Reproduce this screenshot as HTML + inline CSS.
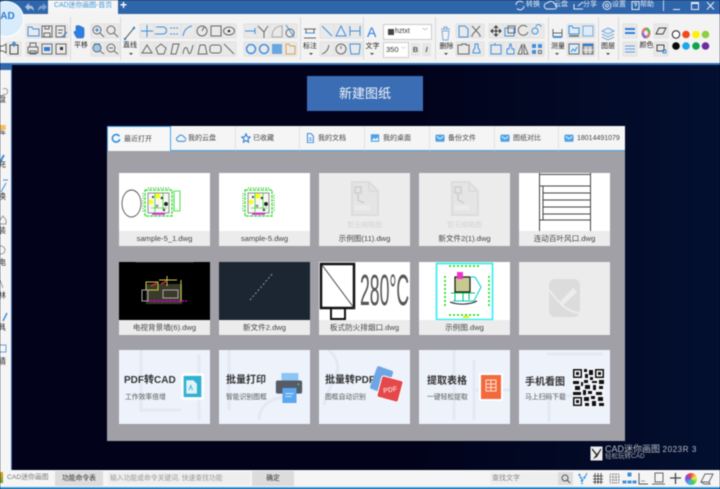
<!DOCTYPE html>
<html lang="zh"><head><meta charset="utf-8"><style>
html,body{margin:0;padding:0}
body{width:720px;height:489px;overflow:hidden;position:relative;background:#02021a;font-family:"Liberation Sans","Noto Sans CJK SC",sans-serif;color:#333}
#w{position:absolute;left:0;top:0;width:720px;height:489px;overflow:hidden;filter:blur(.4px)}
.a{position:absolute;white-space:nowrap}
.tb{font-size:7px;line-height:10px;color:#e6edf7}
.tl{font-size:7px;line-height:12px;color:#222;transform:translateX(-50%)}
.tab{position:absolute;top:126px;height:24px;background:#f5f5f5;border-bottom:1px solid #4aa3e8;border-right:1px solid #e2e2e2;font-size:7px;line-height:25px;color:#444}
.tab span{position:absolute;left:18px}
.tab svg{position:absolute;left:5px;top:7px}
.card{position:absolute;width:91px;height:73px;background:#fff;overflow:hidden}
.card b{position:absolute;left:0;right:0;bottom:0;height:15px;background:#ececec;font:normal 7.6px/15px "Liberation Sans","Noto Sans CJK SC",sans-serif;text-align:center;color:#444}
.gray{background:#ececec}
.pro{position:absolute;width:91px;height:74px;background:#edf2fb;overflow:hidden}
.pro i{position:absolute;font-style:normal;font-weight:700;font-size:10px;line-height:15px;color:#333;white-space:nowrap}
.pro u{position:absolute;text-decoration:none;font-size:6.8px;line-height:10px;color:#555;white-space:nowrap}
.sd{position:absolute;left:-2px;font-size:8px;line-height:10px;color:#333}
</style></head><body><div id="w">

<!-- title bar -->
<div class="a" style="left:0;top:0;width:720px;height:14px;background:#2f66ab"></div>
<div class="a" style="left:48px;top:0;width:70px;height:14px;background:#f5f5f5"></div>
<div class="a" style="left:54px;top:0;font-size:6.900px;line-height:12px;color:#3f97dd">CAD迷你画图-首页</div>
<div class="a" style="left:120px;top:-2px;font-size:12px;font-weight:700;line-height:15px;color:#fff">+</div>
<svg class="a" style="left:24px;top:2px" width="24" height="11"><path d="M1 5 5 1V3.500C8 3.500 10 5 10 9 8.500 7 7 6.500 5 6.500V9Z" fill="#a9c0de"/><path d="M23 5 19 1V3.500C16 3.500 14 5 14 9 15.500 7 17 6.500 19 6.500V9Z" fill="#7f9fc9"/></svg>
<svg class="a" style="left:514px;top:-1px" width="135" height="13" fill="none" stroke="#dfe8f5"><path d="M2 6a4 4 0 0 1 7-2.500M10 7a4 4 0 0 1-7 2.500"/><path d="M33 10h7a2.500 2.500 0 0 0 .5-5 4 4 0 0 0-7-1 3 3 0 0 0-.5 6z"/><path d="M60 5v5h9M64 7l5-4"/><circle cx="93" cy="6.500" r="4"/><circle cx="93" cy="6.500" r="1.500"/><rect x="118" y="2.500" width="7" height="8"/><path d="M120 5c1-1.500 3-1 2.500.5l-1 1v1"/></svg>
<div class="a tb" style="left:526px;top:0">转换</div>
<div class="a tb" style="left:554px;top:0">云盘</div>
<div class="a tb" style="left:583px;top:0">分享</div>
<div class="a tb" style="left:612px;top:0">设置</div>
<div class="a tb" style="left:640px;top:0">帮助</div>
<svg class="a" style="left:660px;top:0" width="60" height="14" fill="none" stroke="#e6edf7"><path d="M3.500 0v11" stroke="#c3d4e8"/><path d="M13 9.500h7M31.500 2.500h7v7h-7zM31.500 3.500h7"/><path d="M47 2l7 7.500M54 2l-7 7.500"/></svg>

<!-- toolbar -->
<div class="a" style="left:0;top:14px;width:720px;height:49px;background:#f3f3f3"></div>
<div class="a" style="left:48px;top:12px;width:70px;height:3px;background:#f3f3f3"></div>
<div class="a" style="left:0;top:63px;width:720px;height:2px;background:#2f72b8"></div>

<svg class="a" style="left:0;top:0" width="720" height="65" fill="none" stroke="#555" stroke-width="1">
<defs>
<rect id="k" x="-7" y="-7" width="14" height="14" rx="1" fill="#e9e9e9" stroke="#e0e0e0"/>
</defs>
<g stroke="#d8d8d8"><path d="M70.500 17v43M120.500 17v43M300.500 17v43M363.500 17v43M435.500 17v43M548.500 17v43M598.500 17v43M618.500 17v43"/></g>
<g>
<use href="#k" x="14" y="49"/><use href="#k" x="33" y="31"/><use href="#k" x="47" y="31"/><use href="#k" x="61" y="31"/><use href="#k" x="33" y="49"/><use href="#k" x="47" y="49"/><use href="#k" x="61" y="49"/>
<use href="#k" x="98" y="31"/><use href="#k" x="112" y="31"/><use href="#k" x="98" y="49"/><use href="#k" x="112" y="49"/>
<use href="#k" x="147" y="31"/><use href="#k" x="161" y="31"/><use href="#k" x="174" y="31"/><use href="#k" x="188" y="31"/><use href="#k" x="202" y="31"/><use href="#k" x="216" y="31"/><use href="#k" x="229" y="31"/>
<use href="#k" x="147" y="49"/><use href="#k" x="161" y="49"/><use href="#k" x="174" y="49"/><use href="#k" x="188" y="49"/><use href="#k" x="202" y="49"/><use href="#k" x="216" y="49"/><use href="#k" x="229" y="49"/>
<use href="#k" x="251" y="31"/><use href="#k" x="264" y="31"/><use href="#k" x="277" y="31"/><use href="#k" x="290" y="31"/><use href="#k" x="251" y="49"/><use href="#k" x="264" y="49"/><use href="#k" x="277" y="49"/><use href="#k" x="290" y="49"/>
<use href="#k" x="327" y="31"/><use href="#k" x="341" y="31"/><use href="#k" x="355" y="31"/><use href="#k" x="327" y="49"/><use href="#k" x="341" y="49"/><use href="#k" x="355" y="49"/>
<use href="#k" x="463" y="31"/><use href="#k" x="477" y="31"/><use href="#k" x="463" y="49"/><use href="#k" x="477" y="49"/>
<use href="#k" x="496" y="31"/><use href="#k" x="510" y="31"/><use href="#k" x="523" y="31"/><use href="#k" x="537" y="31"/><use href="#k" x="496" y="49"/><use href="#k" x="510" y="49"/><use href="#k" x="523" y="49"/><use href="#k" x="537" y="49"/>
<use href="#k" x="574" y="31"/><use href="#k" x="588" y="31"/><use href="#k" x="574" y="49"/><use href="#k" x="588" y="49"/>
<use href="#k" x="630" y="31"/><use href="#k" x="630" y="49"/><use href="#k" x="661" y="31"/><use href="#k" x="661" y="49"/>
</g>
<g stroke="#666"><path d="M0 46h3l3-2v9l-3-2H0z"/>
<path d="M10 45h8v9H10z" stroke="#444"/><path d="M14 47v-5M12 44l2-2 2 2" stroke="#2a7fd4"/>
<path d="M28 36v-9h4l1 2h6v7z" stroke="#3f8fdc"/><path d="M42 26h10v11H42zM45 26v3h4v-3M44 37v-4h6v4"/><path d="M56 26h9v11h-9zM58 30h5M58 33h4"/><path d="M62 37l5-5" stroke="#2a7fd4"/>
<path d="M30 47v-4h6v4M28 47h10v6H28zM30 51h6v3h-6z"/><path d="M42 44h10v10H42z"/><path d="M44 47h6v4h-6z" fill="#2a7fd4" stroke="none"/><path d="M56 44h10v10H56z"/><path d="M60 47h3v3h-3z" fill="#333" stroke="none"/></g>
<path d="M77 38c-2-3-3-5-3-6s2-1 2 1v-6c0-2 2-2 2 0 0-2 2-2 2 0 0-1 2-1 2 1 0-1 2-1 2 1v6c0 2-1 3-2 3z" fill="#2f7fe0" stroke="#1e66c4" stroke-width=".6"/>
<g stroke="#666"><circle cx="97" cy="30" r="4"/><path d="M100 33l4 4"/><path d="M95 30h4M97 28v4" stroke="#2a7fd4"/><circle cx="111" cy="30" r="4"/><path d="M114 33l4 4"/><circle cx="97" cy="48" r="4" fill="#9cc8ef"/><path d="M100 51l4 3M94 44h6"/><circle cx="111" cy="48" r="4"/><path d="M114 51l4 3M109 48h4"/></g>
<path d="M125 39l9-11" stroke="#555"/><circle cx="134" cy="28" r="1.200" fill="#2a7fd4" stroke="none"/><circle cx="125" cy="39" r="1.200" fill="#2a7fd4" stroke="none"/>
<g stroke="#3f8fdc"><path d="M141 31h12M147 25v12"/><path d="M156 27h7a3 3 0 0 1 0 7h-6M157 34l-2 0"/><path d="M170 28h8M170 34h8" stroke-dasharray="2 1"/><path d="M183 36c1-6 4-9 9-10"/></g>
<g stroke="#666"><circle cx="202" cy="31" r="5"/><path d="M202 31l2-4"/><rect x="211" y="26" width="10" height="10"/><ellipse cx="229" cy="31" rx="5.500" ry="4"/></g>
<circle cx="229" cy="31" r="1.300" fill="#333" stroke="none"/>
<g stroke="#666"><path d="M142 53l5-8 5 8z"/><path d="M161 44l5 4-2 6h-6l-2-6z"/><path d="M171 54l2-10h6l-3 10z"/><path d="M183 54c1-8 4-8 5-3s3 3 5-6"/><path d="M198 54l2-9h5l2 9z"/><rect x="210" y="45" width="11" height="8" rx="2.500"/><path d="M224 44l10 10"/></g>
<g stroke="#666"><path d="M245 31h10M255 28v6" stroke="#3f8fdc"/><path d="M258 26l6 6M268 26l-4 6v6"/><path d="M272 37h10V26c-6 0-10 4-10 11z" stroke="#aaa"/><circle cx="290" cy="33" r="4"/><path d="M286 25l8 12" stroke="#3f8fdc"/>
<circle cx="251" cy="49" r="4.500" stroke="#3f8fdc" stroke-width="1.500"/><circle cx="264" cy="49" r="4.500" stroke="#3f8fdc" stroke-width="1.500"/><rect x="272" y="44" width="10" height="10" fill="#3f8fdc" stroke="none" opacity=".75"/><path d="M286 44h3l1 2h5v8h-9z" stroke="#dca04a"/></g>
<g stroke="#666"><path d="M304 29h12M306 29v4M314 29v4M304 38h12"/><path d="M305 33h10" stroke="#3f8fdc"/>
<path d="M322 26l10 10" stroke="#3f8fdc"/><path d="M336 36l5-10 5 10zM336 36h10" stroke="#3f8fdc"/><path d="M350 26v10M360 26v10M350 31h10" stroke="#3f8fdc"/>
<path d="M322 54c3-1 6-3 7-9"/><circle cx="341" cy="49" r="5"/><path d="M341 49v-3"/><path d="M350 44h10v3l-1 7h-8l-1-7z" stroke="#3f8fdc"/></g>
<g stroke="#666"><path d="M442 31h7l-1 9h-5zM441 29h9M444 29v-2h3v2" stroke="#7aa9d4"/>
<path d="M459 26h6l3 3v8h-9z" stroke="#3f8fdc"/><path d="M472 26l8 9M480 26l-8 9M471 36h2M479 36h2"/><path d="M458 45h4v-1h4v1h3v9h-11z"/><path d="M473 53c0-3 1-4 2-5v-4h3v4c1 1 2 2 2 5z" stroke="#3f8fdc"/>
<path d="M491 31h10M496 26v10M494 28l2-2 2 2M494 34l2 2 2-2M493 29l-2 2 2 2M499 29l2 2-2 2" stroke="#333"/><path d="M505 28h9v8h-9z" stroke="#3f8fdc"/><path d="M508 26h7v7h-7z"/><path d="M527 27a5 5 0 1 0 1 5"/><path d="M532 31a3 3 0 1 1 6 0 3 3 0 1 1-6 0M536 27a2.500 2.500 0 1 1 5 0" stroke="#3f8fdc"/>
<path d="M491 45h10v9h-10zM495 45v-2" stroke="#3f8fdc"/><path d="M507 54v-5h2l1-5h1l1 5h2v5z" stroke="#3f8fdc"/><path d="M522 44l-4 10h4zM524 44l4 10h-4z"/></g>
<g fill="#3f8fdc" stroke="none"><rect x="532" y="44" width="4" height="4"/><rect x="538" y="44" width="4" height="4"/><rect x="532" y="50" width="4" height="4"/></g><rect x="538.500" y="50.500" width="3" height="3" stroke="#666"/>
<g stroke="#666"><path d="M553 29v8M562 29v8M553 33h9"/><path d="M553 37h9" stroke="#3f8fdc" stroke-width="2"/><path d="M569 26h3l1 2h6v6h-10z" stroke="#3f8fdc" fill="#dcecfb"/><path d="M569 36h10" stroke-width="1.500"/><rect x="583" y="26" width="10" height="10" fill="#dcecfb" stroke="#7aa9d4"/>
<rect x="569" y="44" width="10" height="10" fill="#dcecfb"/><path d="M571 52l2-3 2 2 2-4" stroke="#3f8fdc"/><rect x="583" y="44" width="10" height="10" fill="#bbb"/><path d="M583 45h10" stroke="#2a7fd4" stroke-width="2"/><path d="M586 47v7M590 47v7M583 50h10" stroke="#eee"/></g>
<g stroke="#7aa9d4"><path d="M608 28l6 3-6 3-6-3z" fill="#e2eefb"/><path d="M602 34l6 3 6-3M602 37l6 3 6-3"/></g>
<g stroke-width="2" stroke="#2f7fe0"><path d="M625 29h10M625 33h10"/></g><g stroke="#5b9ce0"><path d="M625 46h10M625 49h10M625 52h10"/></g>
<ellipse cx="646" cy="33" rx="4.500" ry="5.500" fill="#d77" stroke="none"/><path d="M646 27.500a4.500 5.500 0 0 1 4.500 5.500h-4.500z" fill="#5cb85c" stroke="none"/><path d="M646 33h-4.500a4.500 5.500 0 0 0 4.500 5.500z" fill="#7a6fd0" stroke="none"/><ellipse cx="646" cy="33" rx="2" ry="2.500" fill="#eee" stroke="none"/>
<path d="M656 34l3-6h7l-3 6z" stroke="#444"/><path d="M657 45h7v6h-7z" stroke="#444"/><path d="M663 50h3v3h-3z" stroke="#3f8fdc"/>
<g stroke="none"><circle cx="676" cy="34.500" r="3.700" fill="#fff" stroke="#222"/><circle cx="686" cy="34.500" r="3.800" fill="#f0491c"/><circle cx="696" cy="34.500" r="3.800" fill="#fff200"/><circle cx="705.500" cy="34.500" r="3.800" fill="#8ccf3f"/><circle cx="676" cy="46" r="3.800" fill="#0a0a0a"/><circle cx="686" cy="46" r="3.800" fill="#1ea7e8"/><circle cx="696" cy="46" r="3.800" fill="#0fa34a"/><circle cx="705.500" cy="46" r="3.800" fill="#6a2ea0"/></g>
<g fill="#444" stroke="none"><path d="M129 53h4l-2 2zM309 53h4l-2 2zM370 53h4l-2 2zM444 53h4l-2 2zM555 53h4l-2 2zM606 53h4l-2 2z"/></g>
</svg>
<!-- logo -->
<div class="a" style="left:-12px;top:1px;width:34px;height:34px;border-radius:50%;background:#d9ecfb;border:1px solid #fff"></div>
<div class="a" style="left:-7px;top:11px;font-size:10px;font-weight:700;line-height:12px;color:#2f7fd0"><span style="color:#f0a030">C</span>AD</div>
<div class="a tl" style="left:81px;top:40px">平移</div>
<div class="a tl" style="left:130px;top:40px">直线</div>
<div class="a tl" style="left:310px;top:41px">标注</div>
<div class="a tl" style="left:372.500px;top:41px">文字</div>
<div class="a tl" style="left:446.500px;top:41px">删除</div>
<div class="a tl" style="left:558px;top:41px">测量</div>
<div class="a tl" style="left:608px;top:41px">图层</div>
<div class="a tl" style="left:646.500px;top:40px">颜色</div>
<div class="a" style="left:367px;top:24px;font-size:14px;line-height:16px;color:#2f7fe0">A</div>
<div class="a" style="left:383px;top:24px;width:47px;height:14px;background:#fff;border:1px solid #ccc;font-size:7px;line-height:14px;color:#333;text-indent:11px">hztxt<span style="position:absolute;left:4px;top:4px;width:6px;height:6px;background:#444;text-indent:0"></span><span style="position:absolute;left:38px;top:0;color:#888;font-size:6px;text-indent:0">﹀</span></div>
<div class="a" style="left:383px;top:42px;width:24px;height:14px;background:#fff;border:1px solid #ccc;font-size:7.500px;line-height:14px;color:#333;text-indent:2px">350<span style="position:absolute;left:17px;top:0;color:#888;font-size:5px;text-indent:0">﹀</span></div>
<div class="a" style="left:411px;top:43px;width:9px;height:13px;background:#e6e6e6;font:700 7.500px/13px 'Liberation Sans';text-align:center;color:#555">B</div>
<div class="a" style="left:422px;top:43px;width:9px;height:13px;background:#e6e6e6;font:italic 700 7.500px/13px 'Liberation Sans';text-align:center;color:#555">I</div>

<!-- main bg glow -->
<div class="a" style="left:12px;top:65px;width:708px;height:405px;background:linear-gradient(90deg,#02021a 0,#02021a 55%,#031030 100%)"></div>

<!-- sidebar -->
<div class="a" style="left:0;top:65px;width:11px;height:405px;background:#f5f5f5;border-right:1px solid #3a6fb0;overflow:hidden">
<div class="sd" style="top:30px">盘</div>
<div class="sd" style="top:62px">库</div>
<div class="sd" style="top:95px">充</div>
<div class="sd" style="top:127px">换</div>
<div class="sd" style="top:161px">装</div>
<div class="sd" style="top:193px">电</div>
<div class="sd" style="top:226px">林</div>
<div class="sd" style="top:258px">具</div>
<div class="sd" style="top:292px">猜</div>
</div>
<div class="a" style="left:0;top:64px;width:12px;height:6px;background:#2f66ab"></div>
<svg class="a" style="left:0;top:70px" width="11" height="290" fill="none" stroke="#999"><path d="M3 19a3 3 0 1 1 0 5"/><path d="M0 55h6l-1 5H0z" fill="#f0c060" stroke="none"/><path d="M4 85l-4 7" stroke="#3f8fdc" stroke-width="2"/><path d="M3 110h5M6 113l-5 9" stroke="#3f8fdc"/><path d="M0 150l3-4 3 4v4H0"/><circle cx="1" cy="180" r="4"/><path d="M0 210l3 8"/><path d="M7 243l-4 8" stroke="#3f8fdc" stroke-width="1.500"/><path d="M0 275h6v7H0" stroke="#6aa0d8"/></svg>

<!-- new button -->
<div class="a" style="left:307px;top:76px;width:116px;height:35px;background:#3a6db4;color:#f2f5fa;font-size:13px;line-height:36px;text-align:center">新建图纸</div>

<!-- panel -->
<div class="a" style="left:107px;top:126px;width:518px;height:315px;background:#a0a0a6"></div>
<div class="tab" style="left:171px;width:64px"><svg width="10" height="10" viewBox="0 0 12 12" fill="none" stroke="#3f8fdc" stroke-width="1.300"><path d="M3 10h6a2.500 2.500 0 0 0 .5-5 3.500 3.500 0 0 0-6.500-.5A2.800 2.800 0 0 0 3 10z"/></svg><span style="left:17px">我的云盘</span></div>
<div class="tab" style="left:236px;width:63px"><svg width="10" height="10" viewBox="0 0 12 12" fill="none" stroke="#2f7fd0" stroke-width="1.300"><path d="M6 1l1.500 3.500 3.500.4-2.600 2.400.7 3.700L6 9l-3.100 1.900.7-3.700L1 4.900l3.500-.4z"/></svg><span style="left:17px">已收藏</span></div>
<div class="tab" style="left:300px;width:64px"><svg width="10" height="10" viewBox="0 0 12 12" fill="none" stroke="#3f8fdc" stroke-width="1.300"><path d="M3 .6h4l3 3v8H3z"/><path d="M5 6h3M5 8.500h3"/></svg><span>我的文档</span></div>
<div class="tab" style="left:365px;width:64px"><svg width="10" height="10" viewBox="0 0 12 12"><rect x="1" y="1.500" width="10" height="9" fill="#4fa1e6"/><path d="M2 9l3-3 2 2 2-3 1 4z" fill="#fff"/></svg><span>我的桌面</span></div>
<div class="tab" style="left:430px;width:64px"><svg width="10" height="10" viewBox="0 0 12 12"><rect x=".5" y="2" width="11" height="8.500" rx="1.500" fill="#4fa1e6"/><path d="M2 4l4 3 4-3" stroke="#fff" fill="none"/></svg><span>备份文件</span></div>
<div class="tab" style="left:495px;width:63px"><svg width="10" height="10" viewBox="0 0 12 12"><rect x=".5" y="2" width="11" height="8.500" rx="1.500" fill="#4fa1e6"/><path d="M2 4l4 3 4-3" stroke="#fff" fill="none"/></svg><span>图纸对比</span></div>
<div class="tab" style="left:559px;width:66px;border-right:0"><svg width="10" height="10" viewBox="0 0 12 12"><rect x=".5" y="2" width="11" height="8.500" rx="1.500" fill="#4fa1e6"/><path d="M2 4l4 3 4-3" stroke="#fff" fill="none"/></svg><span>18014491079</span></div>
<div class="tab" style="left:107px;width:62px;background:#f7f7f7;border:1px solid #4aa3e8;border-bottom:0"><svg width="10" height="10" viewBox="0 0 12 12" style="left:3px;top:6px" fill="none" stroke="#2f8fe0" stroke-width="1.900"><path d="M10 4a4.500 4.500 0 1 0 .5 3.500"/></svg><span style="left:16px">最近打开</span></div>

<!-- symbols -->
<svg width="0" height="0" style="position:absolute"><defs>
<g id="plan"><rect x="2" y="3" width="27" height="26" fill="none" stroke="#22dd22" stroke-width="1.200" stroke-dasharray="3 1"/><rect x="5" y="6" width="21" height="20" fill="#f7f7f4" stroke="#222" stroke-width=".5"/><circle cx="15" cy="9" r="2.500" fill="#ff0"/><circle cx="8" cy="15" r="2.200" fill="#ff0"/><circle cx="23" cy="17" r="2" fill="#222"/><circle cx="19" cy="11" r="1.200" fill="#222"/><circle cx="14" cy="19" r="1.500" fill="#999"/><circle cx="10" cy="10" r="1" fill="#222"/><circle cx="21" cy="23" r="1.200" fill="#444"/><path d="M9 27h13" stroke="#f0f" stroke-width="1.500"/><path d="M5 1h21M0 6v20M31 8v16" stroke="#0a0" stroke-width=".9" stroke-dasharray="1 1.500"/><path d="M8 21h16M12 6v20M20 6v18" stroke="#0c0" stroke-width=".6"/></g>
<g id="dwg" fill="none" stroke="#dcdcdc" stroke-width="2"><path d="M2 1h17l9 9v24H2z" fill="#e5e5e5"/><path d="M19 1v9h9"/><rect x="5" y="6" width="6" height="6" stroke="#d2d2d2"/><path d="M8 13v6l6 3" stroke="#d2d2d2"/></g>
</defs></svg>

<!-- row 1 -->
<div class="card" style="left:119px;top:173px"><svg width="91" height="58"><ellipse cx="12.500" cy="30.500" rx="9.500" ry="13.500" fill="none" stroke="#555" stroke-width=".9"/><use href="#plan" x="24" y="14"/><path d="M55 18h6v20h-6z" fill="none" stroke="#2d2" stroke-width=".8"/></svg><b>sample-5_1.dwg</b></div>
<div class="card" style="left:219px;top:173px"><svg width="91" height="58"><use href="#plan" x="24" y="14"/></svg><b>sample-5.dwg</b></div>
<div class="card gray" style="left:319px;top:173px"><svg width="91" height="48" style="position:absolute;left:0;top:6px"><use href="#dwg" x="31" y="2"/><text x="36" y="31" font-size="6" font-weight="700" fill="#f2f2f2" font-family="Liberation Sans">DWG</text></svg><span style="position:absolute;left:0;right:0;top:48px;text-align:center;font-size:7px;line-height:10px;color:#d4d4d4">暂无缩略图</span><b>示例图(11).dwg</b></div>
<div class="card gray" style="left:419px;top:173px"><svg width="91" height="48" style="position:absolute;left:0;top:6px"><use href="#dwg" x="31" y="2"/><text x="36" y="31" font-size="6" font-weight="700" fill="#f2f2f2" font-family="Liberation Sans">DWG</text></svg><span style="position:absolute;left:0;right:0;top:48px;text-align:center;font-size:7px;line-height:10px;color:#d4d4d4">暂无缩略图</span><b>新文件2(1).dwg</b></div>
<div class="card" style="left:519px;top:173px"><svg width="91" height="58" fill="none" stroke="#444"><path d="M20.500 0v58M71.500 0v58"/><path d="M20 1.500h52M21 13h50M24 20h47M24 27h47M24 34h47M24 41h47M21 47h50M24 13v34"/></svg><b>连动百叶风口.dwg</b></div>

<!-- row 2 -->
<div class="card" style="left:119px;top:262px;background:#000"><svg width="91" height="58"><path d="M17 0h58" stroke="#999" stroke-dasharray="1 1"/><rect x="27" y="22" width="36" height="20" fill="#3a3a2a"/><path d="M27 20h12v8H27zM40 18h18M48 14v10M62 18v22" stroke="#c9c94a" fill="none"/><path d="M32 24l6-3M42 22l6-3" stroke="#d33" stroke-width="1.500"/><path d="M30 39h38" stroke="#b0b" stroke-width="1.500" stroke-dasharray="3 1"/><path d="M23 28h6v11h-6zM44 28h15v8H44z" stroke="#aaa" fill="none"/></svg><b>电视背景墙(6).dwg</b></div>
<div class="card" style="left:219px;top:262px;background:#1c2632"><svg width="91" height="58"><path d="M31 38l23-27" stroke="#8c98a0" stroke-dasharray="2 2"/></svg><b>新文件2.dwg</b></div>
<div class="card" style="left:319px;top:262px"><svg width="91" height="58" fill="none" stroke="#111"><rect x="2" y="2" width="33" height="44" stroke-width="2.500"/><path d="M3 3l32 43" stroke="#444"/><path d="M12 47v10h14V47" stroke-width="2"/></svg><div class="a" style="left:41px;top:7px;font-size:44px;line-height:44px;color:#555;transform:scaleX(.4);transform-origin:0 0">280°C</div><b>板式防火排烟口.dwg</b></div>
<div class="card" style="left:419px;top:262px"><svg width="91" height="58" fill="none"><rect x="17.500" y="1.500" width="56" height="56" stroke="#2ee" stroke-width="1.500"/><path d="M30 4h30M26 14v30M70 14v30M30 53h30" stroke="#0d0" stroke-width="1.500" stroke-dasharray="2 2"/><rect x="36" y="15" width="15" height="15" stroke="#111" stroke-width="1.200" fill="#c8c890"/><path d="M38 10h6v7h-6z" fill="#e3c"/><path d="M51 15h5l6 10-7 14H34" stroke="#0cc"/><path d="M32 31h24M36 31v8M44 31v8M50 31v7" stroke="#0b6"/><path d="M31 40c8 3 19 3 27-1" stroke="#222"/><path d="M44 55h6" stroke="#ee0" stroke-width="2"/></svg><b>示例图.dwg</b></div>
<div class="card gray" style="left:519px;top:262px"><svg width="91" height="74"><rect x="30" y="17" width="31" height="38" rx="6" fill="#dcdcdc"/><path d="M40 41l14-15 4 4-15 14z" fill="#ececec"/><path d="M30 28c8 10 16 22 31 23" stroke="#ececec" stroke-width="2" fill="none"/></svg></div>

<!-- row 3 -->
<div class="pro" style="left:119px;top:350px"><svg width="91" height="74" style="position:absolute;left:0;top:0" fill="none" stroke="#e3e9f4" stroke-width="3"><path d="M22 0v60h40M80 4v66"/></svg><i style="left:5px;top:23px">PDF转CAD</i><u style="left:6px;top:43px">工作效率倍增</u><svg width="23" height="27" viewBox="0 0 26 30" style="position:absolute;left:62px;top:23px"><rect width="26" height="30" rx="2" fill="#fff"/><rect x="3" y="3" width="20" height="24" fill="#32b0d0"/><path d="M6 8h8l4 4v11H6z" fill="#e0f3f9"/><path d="M9 19l2-5 2 5" stroke="#32b0d0" fill="none"/></svg></div>
<div class="pro" style="left:219px;top:350px"><svg width="91" height="74" style="position:absolute;left:0;top:0" fill="none" stroke="#e3e9f4" stroke-width="3"><path d="M10 0v60M40 70c0-18 18-24 36-24"/></svg><i style="left:7px;top:23px">批量打印</i><u style="left:7px;top:43px">智能识别图框</u><svg width="28" height="30" viewBox="0 0 28 32" style="position:absolute;left:56px;top:23px"><rect x="6" y="0" width="18" height="8" fill="#8cc4f5"/><rect x="0" y="8" width="28" height="14" rx="2" fill="#555c66"/><rect x="7" y="16" width="15" height="16" fill="#5aa7ef"/><path d="M10 22h9M10 25h7" stroke="#d7e9fb"/><circle cx="24" cy="12" r="1" fill="#4c8"/></svg></div>
<div class="pro" style="left:319px;top:350px"><svg width="91" height="74" style="position:absolute;left:0;top:0" fill="none" stroke="#e3e9f4" stroke-width="3"><path d="M10 0c20 20 0 30-5 55"/></svg><i style="left:6px;top:23px">批量转PDF</i><u style="left:6px;top:43px">图框自动识别</u><svg width="36" height="42" style="position:absolute;left:51px;top:16px"><rect x="3" y="2" width="17" height="24" rx="2" fill="#6ea6e4" transform="rotate(20 12 14)"/><rect x="9" y="12" width="22" height="22" rx="2" fill="#e5484a" stroke="#fff" stroke-width="1" transform="rotate(15 20 23)"/><text x="13" y="26" font-size="7" font-weight="700" fill="#f7c8c8" font-family="Liberation Sans" transform="rotate(-10 20 23)">PDF</text></svg></div>
<div class="pro" style="left:419px;top:350px"><svg width="91" height="74" style="position:absolute;left:0;top:0" fill="none" stroke="#e3e9f4" stroke-width="3"><path d="M35 0v70M55 10v60M55 40h36"/></svg><i style="left:8px;top:24px">提取表格</i><u style="left:8px;top:43px">一键轻松提取</u><svg width="24" height="28" style="position:absolute;left:60px;top:23px"><rect width="24" height="28" rx="2" fill="#fff"/><rect x="2" y="2" width="20" height="24" fill="#f26a3c"/><path d="M7 7h10v11h-10zM7 11h10M7 14.500h10M12 7v11" stroke="#fde0d4" fill="none"/></svg></div>
<div class="pro" style="left:519px;top:350px"><svg width="91" height="74" style="position:absolute;left:0;top:0" fill="none" stroke="#e3e9f4" stroke-width="3"><path d="M30 72V46h50M28 4h56"/></svg><i style="left:6px;top:25px">手机看图</i><u style="left:6px;top:43px">马上扫码下载</u>
<svg width="33" height="39" style="position:absolute;left:53px;top:18px" shape-rendering="crispEdges"><rect width="33" height="39" fill="#f4f6fb"/><g fill="#111"><path d="M1 1h9v9H1zM2.500 2.500v6h6v-6zM23 1h9v9h-9zM24.500 2.500v6h6v-6zM1 29h9v9H1zM2.500 30.500v6h6v-6z" fill-rule="evenodd"/><path d="M4 4h3v3H4zM26 4h3v3h-3zM4 32h3v3H4zM12 1h3v3h-3zM17 2h4v5h-4zM13 6h3v4h-3zM18 9h3v3h-3zM12 12h4v3h-4zM1 13h6v3H1zM9 14h2v4H9zM20 13h5v2h-5zM27 12h5v4h-5zM3 18h5v4H3zM13 17h5v4h-5zM21 17h3v5h-3zM27 18h4v3h-4zM1 24h8v3H1zM11 22h3v5h-3zM16 23h4v3h-4zM24 24h6v3h-6zM12 29h5v4h-5zM19 28h4v3h-4zM26 29h5v4h-5zM13 35h4v3h-4zM20 33h4v5h-4zM27 35h5v3h-5z"/></g></svg></div>

<!-- brand -->
<svg class="a" style="left:590px;top:446px" width="13" height="15"><rect x=".5" y=".5" width="12" height="14" fill="#ececec"/><path d="M2 2l5 6 4-6v2L7 11 3 13l3-4L2 4z" fill="#222"/></svg>
<div class="a" style="left:605px;top:443px;font-size:9px;line-height:13px;color:#b8bcc4">CAD迷你画图 <span style="font-size:8px;letter-spacing:.6px">2023R 3</span></div>
<div class="a" style="left:605px;top:452px;font-size:6.500px;line-height:10px;color:#a8acb4">轻松玩转CAD</div>

<!-- status bar -->
<div class="a" style="left:0;top:470px;width:720px;height:17px;background:#f5f5f5"></div>
<div class="a" style="left:0;top:487px;width:720px;height:2px;background:#3fa0e6"></div>
<div class="a" style="left:0;top:472px;width:3px;height:11px;background:linear-gradient(#e8a020,#6aa030)"></div>
<div class="a" style="left:7px;top:472px;font-size:6.800px;line-height:12px;color:#777">CAD迷你画图</div>
<div class="a" style="left:55px;top:471px;width:48px;height:15px;background:#dcdcdc;font-size:6.800px;line-height:15px;text-align:center;color:#333">功能命令表</div>
<div class="a" style="left:108px;top:472px;width:142px;height:13px;background:#eeeeee;font-size:6.800px;line-height:13px;color:#999;text-indent:2px;overflow:hidden">输入功能或命令关键词, 快速查找功能</div>
<div class="a" style="left:252px;top:471px;width:42px;height:15px;background:#dcdcdc;font-size:6.800px;line-height:15px;text-align:center;color:#333">确定</div>
<div class="a" style="left:490px;top:472px;width:68px;height:13px;background:#eeeeee;font-size:7px;line-height:13px;color:#888;text-indent:2px">查找文字</div>
<div class="a" style="left:558px;top:472px;width:15px;height:13px;background:#dcdcdc"></div>
<svg class="a" style="left:558px;top:470px" width="162" height="17" fill="none" stroke="#555"><circle cx="7" cy="8" r="3"/><path d="M9 10l3 3"/>
<path d="M21 4l3 6 3-3M24 10v4" stroke="#2f8fe0" stroke-width="2" stroke-dasharray="2 1"/><path d="M29 3l-2 4" stroke="#2f8fe0"/>
<path d="M37 3v11M40 3v11M43 3v11M35 6h10M35 9h10M35 12h10"/><path d="M52 4h9v9h-9z" stroke="#777" stroke-dasharray="1 1"/><path d="M52 7h9M52 10h9M55 4v9M58 4v9" stroke="#777" stroke-dasharray="1 1"/>
<path d="M70 13h3v-2h-3zM65 13h3v-2h-3zM75 13h3v-2h-3zM70 6h3V3h-3z" fill="#3f8fdc" stroke="#3f8fdc"/><path d="M81 3v11h9"/><path d="M83 11h4" stroke="#999"/>
<path d="M97 3h8v9h-8zM94 14h13" stroke="#666"/><path d="M112 8h11M117.500 3v11" stroke="#444" stroke-width="1.300"/></svg>
<div class="a" style="left:685px;top:473px;width:12px;height:12px;border-radius:50%;background:conic-gradient(#e44,#ee4,#4c5,#4ae,#84d,#e44)"></div>
<svg class="a" style="left:699px;top:472px" width="16" height="14" fill="none" stroke="#666"><path d="M2 10l4-8h8l-4 8zM2 10l3 2h6l-1-2"/></svg>
</div></body></html>
